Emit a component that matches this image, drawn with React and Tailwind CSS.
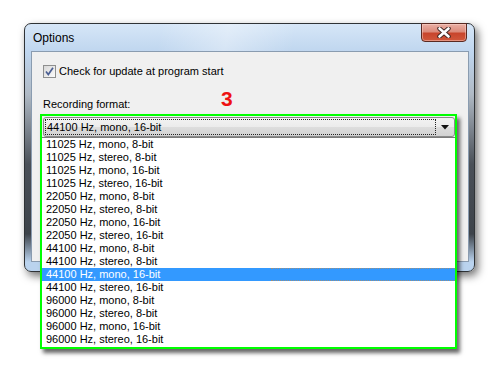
import React from 'react';

const formats = [
  '11025 Hz, mono, 8-bit',
  '11025 Hz, stereo, 8-bit',
  '11025 Hz, mono, 16-bit',
  '11025 Hz, stereo, 16-bit',
  '22050 Hz, mono, 8-bit',
  '22050 Hz, stereo, 8-bit',
  '22050 Hz, mono, 16-bit',
  '22050 Hz, stereo, 16-bit',
  '44100 Hz, mono, 8-bit',
  '44100 Hz, stereo, 8-bit',
  '44100 Hz, mono, 16-bit',
  '44100 Hz, stereo, 16-bit',
  '96000 Hz, mono, 8-bit',
  '96000 Hz, stereo, 8-bit',
  '96000 Hz, mono, 16-bit',
  '96000 Hz, stereo, 16-bit',
];

function CloseButton() {
  return (
    <div className="absolute right-[7px] top-[-1px] w-[46px] h-[19px] rounded-b-[4px] border border-[#5a2a22] bg-[linear-gradient(to_bottom,#eab0a5_0%,#dc8b7b_45%,#c8452c_55%,#d0583c_100%)] shadow-[inset_0_0_0_1px_rgba(255,220,210,0.45)] flex items-center justify-center">
      <svg width="14" height="11" viewBox="0 0 14 11">
        <path d="M2.5 1.5 L11.5 9.5 M11.5 1.5 L2.5 9.5" stroke="#3b2320" strokeWidth="4.4" strokeLinecap="round" fill="none" />
        <path d="M2.5 1.5 L11.5 9.5 M11.5 1.5 L2.5 9.5" stroke="#ffffff" strokeWidth="2.6" strokeLinecap="round" fill="none" />
      </svg>
    </div>
  );
}

function Checkbox() {
  return (
    <div className="w-[13px] h-[13px] border border-[#8e8f8f] bg-[linear-gradient(135deg,#d8d8d8,#fbfbfb)] flex items-center justify-center">
      <svg width="11" height="11" viewBox="0 0 11 11">
        <path d="M2 5.5 L4.3 8.5 L9 1.8" stroke="#4b5f93" strokeWidth="1.7" fill="none" />
      </svg>
    </div>
  );
}

export default function App() {
  return (
    <div className="w-[500px] h-[375px] bg-white relative overflow-hidden font-['Liberation_Sans',Arial,sans-serif] text-black pt-[23px] pl-[24px]">
      {/* dialog window */}
      <div className="w-[451px] h-[249px] rounded-[7px] border border-[#2f3336] shadow-[3px_4px_8px_rgba(0,0,0,0.55)] bg-[linear-gradient(to_bottom,#d6e6f7_0px,#bfd6ef_28px,#b0bac5_70px,#4a5058_140px,#3d434a_210px,#bad3ee_238px)] flex flex-col">
        <div className="relative h-[27px] pl-[8px] pt-[7px] text-[12px] leading-[14px] bg-[linear-gradient(100deg,rgba(255,255,255,0)_30%,rgba(255,255,255,0.35)_45%,rgba(255,255,255,0)_60%)]">
          Options
          <CloseButton />
        </div>
        <div className="flex-1 ml-[6px] mr-[5px] mb-[9px] border border-[#8a9cb0] bg-[#f0f0f0] pl-[11px] pt-[13px]">
          <div className="flex items-start gap-[3px] h-[13px]">
            <Checkbox />
            <span className="text-[11px] leading-[13px]">Check for update at program start</span>
          </div>
          <div className="mt-[20px] text-[11px] leading-[13px]">Recording format:</div>
        </div>
      </div>

      {/* annotation number */}
      <div className="absolute left-[221px] top-[88px] text-[21px] leading-none font-bold text-[#ee1111]">3</div>

      {/* open drop-down, outlined in green */}
      <div className="absolute left-[40px] top-[114px] w-[417px] h-[235px] border-2 border-[#00ff00] bg-[#f0f0f0] shadow-[3px_4px_4px_rgba(0,0,0,0.6)] flex flex-col pt-[1px]">
        <div className="ml-[1px] h-[20px] rounded-[3px] border border-[#8a8a8a] bg-[linear-gradient(to_bottom,#f3f3f3_0%,#ebebeb_50%,#dddddd_51%,#d2d2d2_100%)] flex items-stretch">
          <div className="flex-1 ml-[1px] my-[1px] border border-dotted border-[#222] flex items-center pl-[1px] text-[11px] leading-[13px]">
            44100 Hz, mono, 16-bit
          </div>
          <div className="w-[18px] flex items-center justify-center">
            <svg width="8" height="5" viewBox="0 0 8 5">
              <path d="M0 0 H8 L4 4.5 Z" fill="#111" />
            </svg>
          </div>
        </div>
        <div className="flex-1 border-t border-[#7a7a7a] bg-white">
          {formats.map((f, i) => (
            <div
              key={f}
              className={
                i === 10
                  ? 'relative h-[13px] pl-[4px] text-[11px] leading-[13px] bg-[#3399ff] text-white'
                  : 'h-[13px] pl-[4px] text-[11px] leading-[13px]'
              }
            >
              {f}
              {i === 10 && (
                <div className="absolute left-[229px] right-0 top-0 bottom-0 border-y border-dotted border-[#c48a4a]/70" />
              )}
            </div>
          ))}
        </div>
      </div>
    </div>
  );
}
